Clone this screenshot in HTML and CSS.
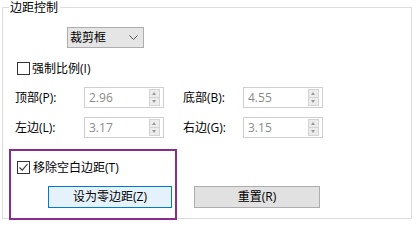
FILE: index.html
```html
<!DOCTYPE html>
<html lang="zh-CN">
<head>
<meta charset="utf-8">
<link rel="stylesheet" href="styles.css">
</head>
<body>
<fieldset class="group">
  <legend class="group-title">边距控制</legend>
  <div class="select">
    <span class="select-text">裁剪框</span>
    <svg class="chev" width="9" height="5" viewBox="0 0 9 5"><path d="M0.5 0.5 L4.5 4.5 L8.5 0.5" fill="none" stroke="#555" stroke-width="1"/></svg>
  </div>
  <label class="check-row ratio">
    <span class="box"></span>
    <span>强制比例(I)</span>
  </label>
  <div class="fields">
    <span class="lbl">顶部(P):</span>
    <div class="spin"><span class="val">2.96</span><span class="btns"><span class="b up"></span><span class="b down"></span></span></div>
    <span class="lbl lbl-r">底部(B):</span>
    <div class="spin"><span class="val">4.55</span><span class="btns"><span class="b up"></span><span class="b down"></span></span></div>
    <span class="lbl">左边(L):</span>
    <div class="spin"><span class="val">3.17</span><span class="btns"><span class="b up"></span><span class="b down"></span></span></div>
    <span class="lbl lbl-r">右边(G):</span>
    <div class="spin"><span class="val">3.15</span><span class="btns"><span class="b up"></span><span class="b down"></span></span></div>
  </div>
  <div class="bottom">
    <div class="highlight">
      <label class="check-row">
        <span class="box checked"><svg width="11" height="11" viewBox="0 0 11 11"><path d="M1.5 5.5 L4.2 8.2 L9.5 2" fill="none" stroke="#333" stroke-width="1.1"/></svg></span>
        <span>移除空白边距(T)</span>
      </label>
      <button class="btn btn-focus">设为零边距(Z)</button>
    </div>
    <button class="btn btn-reset">重置(R)</button>
  </div>
</fieldset>
</body>
</html>
```
FILE: styles.css
```css
html, body {
  margin: 0;
  padding: 0;
  background: #ffffff;
}
body {
  width: 416px;
  height: 226px;
  font-family: "Open Sans", "Noto Sans CJK SC", sans-serif;
  font-size: 12px;
  color: #000;
  overflow: hidden;
}
.group {
  margin: 0 0 0 2px;
  width: 410px;
  box-sizing: border-box;
  padding: 0;
  border: 1px solid #dcdcdc;
  height: 219px;
  min-width: 0;
}
.group-title {
  margin-left: 6px;
  padding: 0 2px 0 1px;
  line-height: 15px;
  height: 15px;
  color: #000;
}
.select {
  margin: 12px 0 0 64px;
  width: 77px;
  height: 21px;
  box-sizing: border-box;
  background: #e5e5e5;
  border: 1px solid #adadad;
  display: flex;
  align-items: center;
  justify-content: space-between;
  padding: 0 5px 0 2px;
}
.select-text {
  line-height: 19px;
}
.chev {
  display: block;
}
.check-row {
  display: flex;
  align-items: center;
  height: 17px;
  line-height: 17px;
}
.ratio {
  margin: 12px 0 0 14px;
}
.box {
  width: 13px;
  height: 13px;
  box-sizing: border-box;
  border: 1px solid #333333;
  background: #fff;
  margin-right: 2px;
  display: flex;
  align-items: center;
  justify-content: center;
}
.box svg {
  display: block;
}
.fields {
  margin: 10px 0 0 12px;
  display: grid;
  grid-template-columns: 69px 80px 79px 80px;
  row-gap: 9px;
  align-items: center;
}
.lbl {
  line-height: 16px;
}
.lbl-r {
  margin-left: 19px;
}
.spin {
  height: 21px;
  box-sizing: border-box;
  border: 1px solid #cfcfcf;
  background: #fff;
  display: flex;
  align-items: center;
  justify-content: space-between;
  padding: 1px 2px 1px 4px;
}
.val {
  font-family: "Open Sans", sans-serif;
  font-size: 12px;
  color: #8a8a8a;
  line-height: 17px;
}
.btns {
  width: 11px;
  height: 17px;
  display: flex;
  flex-direction: column;
  margin-right: 1px;
}
.b {
  flex: 1;
  background: #ececec;
  border: 1px solid #d4d4d4;
  position: relative;
}
.b + .b {
  border-top: none;
}
.b::after {
  content: "";
  position: absolute;
  left: 2px;
  top: 2px;
  border-left: 2.5px solid transparent;
  border-right: 2.5px solid transparent;
}
.up::after {
  border-bottom: 3px solid #9a9a9a;
}
.down::after {
  top: 2px;
  border-top: 3px solid #9a9a9a;
}
.bottom {
  margin: 11px 0 0 6px;
  display: flex;
  align-items: flex-start;
}
.highlight {
  width: 168px;
  height: 71px;
  box-sizing: border-box;
  border: 2px solid #8a2b8e;
  padding: 8px 0 0 6px;
  margin-bottom: -3px;
  position: relative;
}
.highlight .check-row .box {
  margin-right: 3px;
}
.btn {
  font-family: "Open Sans", "Noto Sans CJK SC", sans-serif;
  font-size: 12px;
  height: 22px;
  line-height: 18px;
  padding: 0;
  color: #000;
  display: block;
}
.btn-focus {
  margin: 10px 0 0 31px;
  width: 124px;
  background: #e5f1fb;
  border: 1px solid #0078d7;
}
.btn-reset {
  margin: 37px 0 0 17px;
  width: 126px;
  background: #e1e1e1;
  border: 1px solid #adadad;
}
```
